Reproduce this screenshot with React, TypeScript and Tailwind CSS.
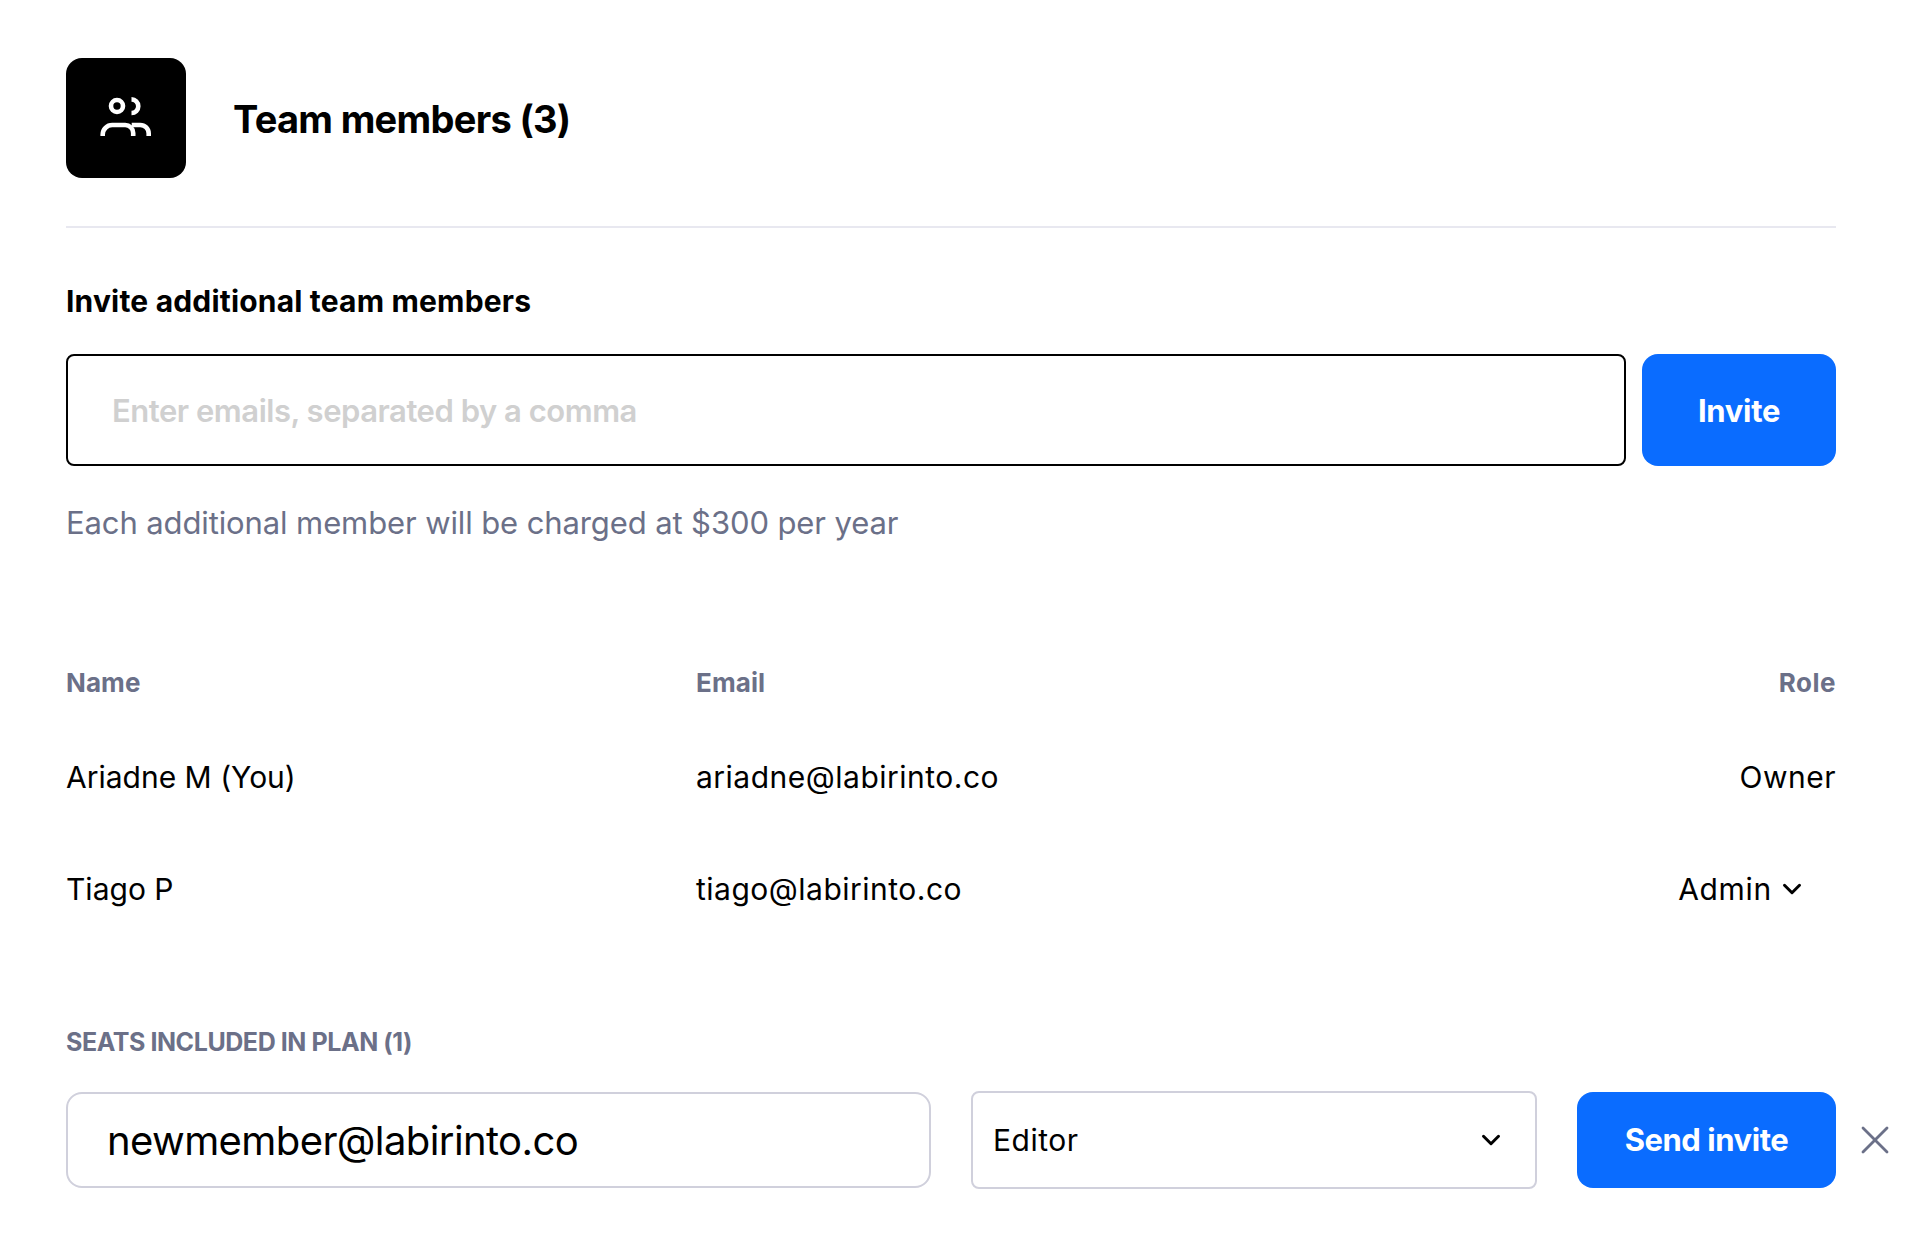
import { ChevronDown, X } from 'lucide-react';

function TeamIcon() {
  return (
    <svg width="56" height="44" viewBox="0 0 56 44" fill="none" stroke="white" strokeWidth="4.6">
      <circle cx="19" cy="10" r="6" />
      <path d="M33.5 3.4a6.8 6.8 0 0 1 0 13.6" />
      <path d="M4.7 40v-1.5a9.5 9.5 0 0 1 9.5-9.5h13a8 8 0 0 1 8 8v3" />
      <path d="M33.7 29h8.5a8.5 8.5 0 0 1 8.5 8.5V40" />
    </svg>
  );
}

const members = [
  { name: 'Ariadne M (You)', email: 'ariadne@labirinto.co', role: 'Owner' },
  { name: 'Tiago P', email: 'tiago@labirinto.co', role: 'Admin' },
];

export default function App() {
  return (
    <div className="min-h-[1250px] bg-white pl-[66px] pt-[58px] font-['Inter',sans-serif] text-black">
      <div className="w-[1770px]">
        {/* Header */}
        <div className="flex items-center gap-[47px]">
          <div className="flex h-[120px] w-[120px] items-center justify-center rounded-[16px] bg-black">
            <TeamIcon />
          </div>
          <h1 className="mt-[2px] text-[38px] font-bold leading-[48px] tracking-[-0.7px]">Team members (3)</h1>
        </div>
        <div className="mt-[48px] h-[2px] bg-[#e8e8f0]" />

        {/* Invite */}
        <h2 className="mt-[53px] text-[30px] font-bold leading-[40px] tracking-[0.18px]">
          Invite additional team members
        </h2>
        <div className="mt-[33px] flex gap-[16px]">
          <div className="flex h-[112px] flex-1 items-center rounded-[8px] border-2 border-black px-[44px]">
            <span className="mt-[2px] text-[31px] font-semibold tracking-[-0.47px] text-[#d0d0d0]">Enter emails, separated by a comma</span>
          </div>
          <button className="h-[112px] w-[194px] rounded-[16px] bg-[#0a6cff] pt-[2px] text-[31px] font-bold tracking-[-0.3px] text-white">
            Invite
          </button>
        </div>
        <p className="mt-[37px] text-[31px] leading-[40px] tracking-[-0.11px] text-[#6b7088]">
          Each additional member will be charged at $300 per year
        </p>

        {/* Members */}
        <div className="mt-[125px] flex text-[26px] font-bold leading-[30px] tracking-[0.1px] text-[#6b7088]">
          <span className="w-[630px]">Name</span>
          <span className="flex-1">Email</span>
          <span className="tracking-[0.5px]">Role</span>
        </div>
        {members.map((m, i) => (
          <div
            key={m.email}
            className={`flex items-center text-[30px] leading-[40px] ${i === 0 ? 'mt-[59px]' : 'mt-[72px]'}`}
          >
            <span className="w-[630px]">{m.name}</span>
            <span className="flex-1 tracking-[0.5px]">{m.email}</span>
            {m.role === 'Admin' ? (
              <span className="mr-[29px] flex items-center gap-[5px] tracking-[0.7px]">
                {m.role}
                <ChevronDown className="h-[30px] w-[30px]" strokeWidth={2.4} />
              </span>
            ) : (
              <span className="tracking-[0.5px]">{m.role}</span>
            )}
          </div>
        ))}

        {/* Seats */}
        <div className="mt-[118px] text-[25px] font-bold uppercase leading-[30px] tracking-[-0.43px] text-[#6b7088]">
          Seats included in plan (1)
        </div>
        <div className="mt-[34px] mr-[-72px] flex items-center">
          <div className="flex h-[96px] w-[865px] items-center rounded-[16px] border-2 border-[#d0d0dc] px-[39px] pt-[2px] text-[40px] tracking-[-0.6px]">
            newmember@labirinto.co
          </div>
          <div className="ml-[40px] flex h-[98px] w-[566px] items-center justify-between rounded-[8px] border-2 border-[#d0d0dc] pl-[20px] pr-[29px] text-[30px] tracking-[0.5px]">
            <span className="pt-[1px]">Editor</span>
            <ChevronDown className="h-[30px] w-[30px]" strokeWidth={2.4} />
          </div>
          <button className="ml-[40px] h-[96px] w-[259px] rounded-[16px] bg-[#0a6cff] pt-[1px] text-[31px] font-bold tracking-[-0.45px] text-white">
            Send invite
          </button>
          <X className="ml-[15px] h-[48px] w-[48px] text-[#6b7088]" strokeWidth={1.4} />
        </div>
      </div>
    </div>
  );
}
